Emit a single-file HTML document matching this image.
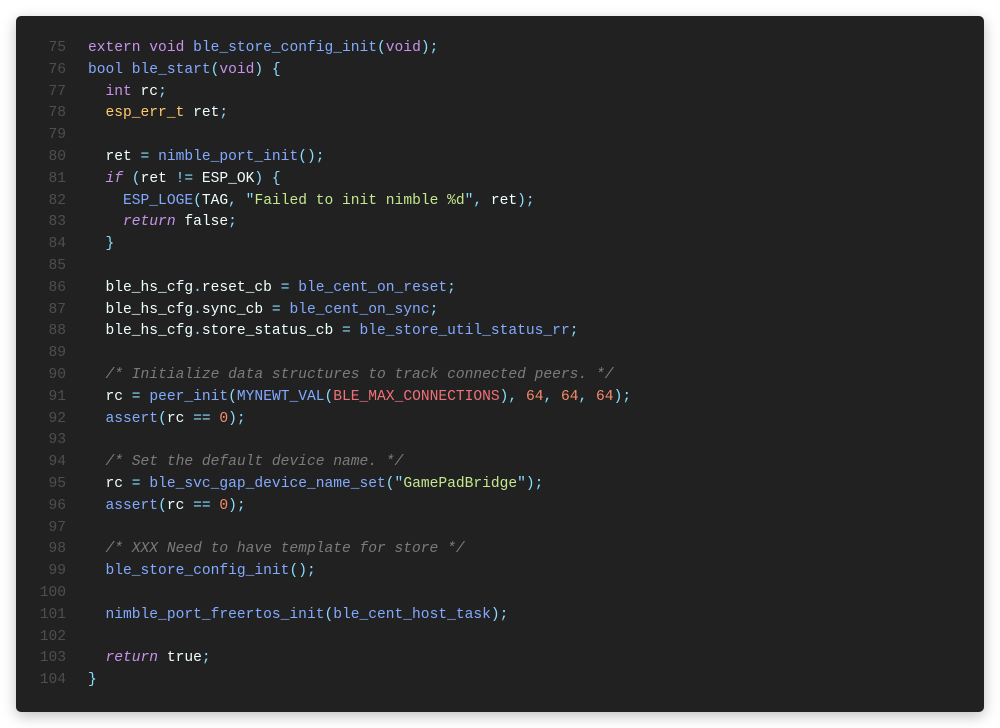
<!DOCTYPE html>
<html><head><meta charset="utf-8"><style>
html,body{margin:0;padding:0;width:1000px;height:728px;background:#fff;overflow:hidden}
.card{position:absolute;left:16px;top:16px;width:968px;height:696px;background:#212121;border-radius:5px;box-shadow:0 4px 14px rgba(0,0,0,.25)}
pre{position:absolute;left:0;top:22px;margin:0;font-family:"Liberation Mono",monospace;font-size:14.6px;line-height:21.8px;color:#eeffff}
.ln{display:inline-block;width:50px;text-align:right;color:#4e4e4e;margin-right:22px}
.k{color:#c792ea}.i{color:#c792ea;font-style:italic}.f{color:#82aaff}.p{color:#89ddff}.t{color:#ffcb6b}.s{color:#c3e88d}.n{color:#f78c6c}.m{color:#f07178}.c{color:#7b7b7b;font-style:italic}
</style></head><body><div class="card"><pre>
<span class="ln">75</span><span class="k">extern void</span> <span class="f">ble_store_config_init</span><span class="p">(</span><span class="k">void</span><span class="p">);</span>
<span class="ln">76</span><span class="f">bool</span> <span class="f">ble_start</span><span class="p">(</span><span class="k">void</span><span class="p">) {</span>
<span class="ln">77</span>  <span class="k">int</span> rc<span class="p">;</span>
<span class="ln">78</span>  <span class="t">esp_err_t</span> ret<span class="p">;</span>
<span class="ln">79</span>
<span class="ln">80</span>  ret <span class="p">=</span> <span class="f">nimble_port_init</span><span class="p">();</span>
<span class="ln">81</span>  <span class="i">if</span> <span class="p">(</span>ret <span class="p">!=</span> ESP_OK<span class="p">) {</span>
<span class="ln">82</span>    <span class="f">ESP_LOGE</span><span class="p">(</span>TAG<span class="p">,</span> <span class="p">"</span><span class="s">Failed to init nimble %d</span><span class="p">",</span> ret<span class="p">);</span>
<span class="ln">83</span>    <span class="i">return</span> false<span class="p">;</span>
<span class="ln">84</span>  <span class="p">}</span>
<span class="ln">85</span>
<span class="ln">86</span>  ble_hs_cfg<span class="p">.</span>reset_cb <span class="p">=</span> <span class="f">ble_cent_on_reset</span><span class="p">;</span>
<span class="ln">87</span>  ble_hs_cfg<span class="p">.</span>sync_cb <span class="p">=</span> <span class="f">ble_cent_on_sync</span><span class="p">;</span>
<span class="ln">88</span>  ble_hs_cfg<span class="p">.</span>store_status_cb <span class="p">=</span> <span class="f">ble_store_util_status_rr</span><span class="p">;</span>
<span class="ln">89</span>
<span class="ln">90</span>  <span class="c">/* Initialize data structures to track connected peers. */</span>
<span class="ln">91</span>  rc <span class="p">=</span> <span class="f">peer_init</span><span class="p">(</span><span class="f">MYNEWT_VAL</span><span class="p">(</span><span class="m">BLE_MAX_CONNECTIONS</span><span class="p">),</span> <span class="n">64</span><span class="p">,</span> <span class="n">64</span><span class="p">,</span> <span class="n">64</span><span class="p">);</span>
<span class="ln">92</span>  <span class="f">assert</span><span class="p">(</span>rc <span class="p">==</span> <span class="n">0</span><span class="p">);</span>
<span class="ln">93</span>
<span class="ln">94</span>  <span class="c">/* Set the default device name. */</span>
<span class="ln">95</span>  rc <span class="p">=</span> <span class="f">ble_svc_gap_device_name_set</span><span class="p">("</span><span class="s">GamePadBridge</span><span class="p">");</span>
<span class="ln">96</span>  <span class="f">assert</span><span class="p">(</span>rc <span class="p">==</span> <span class="n">0</span><span class="p">);</span>
<span class="ln">97</span>
<span class="ln">98</span>  <span class="c">/* XXX Need to have template for store */</span>
<span class="ln">99</span>  <span class="f">ble_store_config_init</span><span class="p">();</span>
<span class="ln">100</span>
<span class="ln">101</span>  <span class="f">nimble_port_freertos_init</span><span class="p">(</span><span class="f">ble_cent_host_task</span><span class="p">);</span>
<span class="ln">102</span>
<span class="ln">103</span>  <span class="i">return</span> true<span class="p">;</span>
<span class="ln">104</span><span class="p">}</span>
</pre></div></body></html>
